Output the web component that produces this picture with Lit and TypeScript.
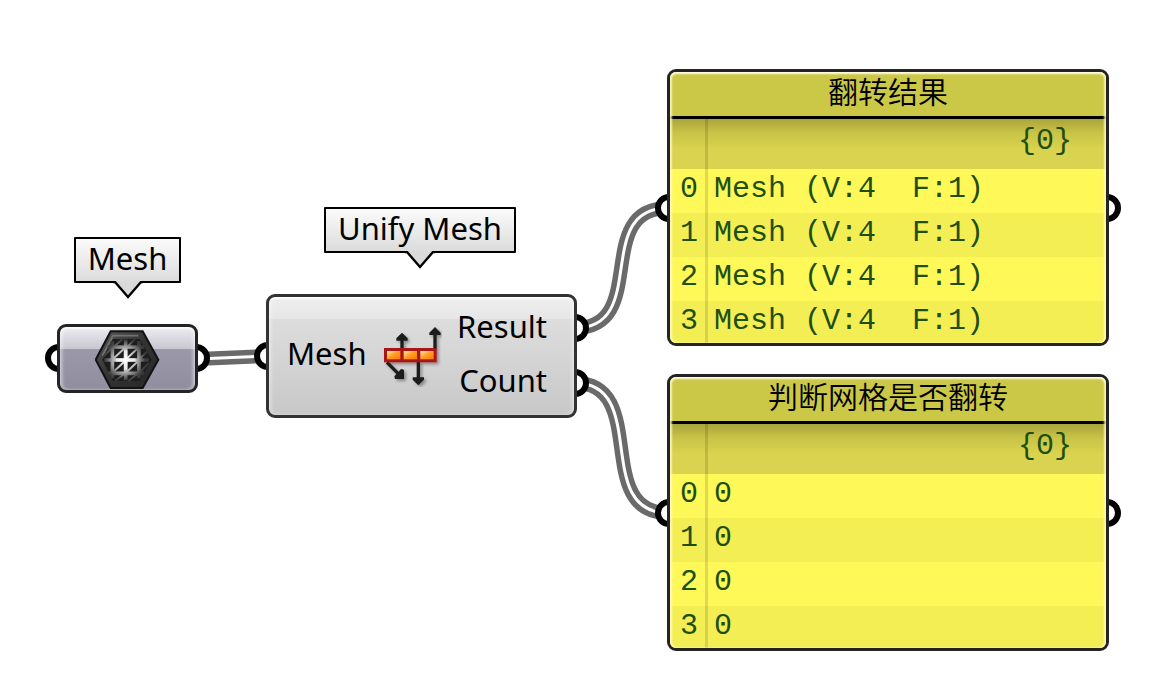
import { LitElement, html, css, svg } from "lit";
import { customElement, property } from "lit/decorators.js";

const cjk = css`"Noto Sans CJK SC", sans-serif`;

/** Small speech-bubble label that floats above a node. */
@customElement("node-tag")
class NodeTag extends LitElement {
  @property() label = "";

  static styles = css`
    :host { display: flex; flex-direction: column; align-items: center; }
    .box {
      box-sizing: border-box;
      width: 100%;
      border: 2px solid #000;
      border-radius: 1px;
      height: 46px;
      font: 31px/38px "Noto Sans", "Open Sans", sans-serif;
      text-align: center;
      white-space: nowrap;
      background: linear-gradient(#fbfbfb, #dcdcdc);
    }
    .tail { display: block; margin-top: -2px; }
  `;

  render() {
    return html`
      <div class="box">${this.label}</div>
      <svg class="tail" width="32" height="19" viewBox="0 0 32 19" aria-hidden="true">
        <path d="M3 0 L16 15 L29 0 Z" fill="#dadada" />
        <path d="M1 1 H3 L16 16 L29 1 H31" fill="none" stroke="#000" stroke-width="2.4" />
      </svg>
    `;
  }
}

/** Yellow data panel: title bar, branch path and indexed items. */
@customElement("data-panel")
class DataPanel extends LitElement {
  @property() heading = "";
  @property() path = "{0}";
  @property({ attribute: false }) items: string[] = [];

  static styles = css`
    :host { display: block; }
    .panel {
      position: relative;
      border: 3px solid #242424;
      border-radius: 9px;
      overflow: hidden;
      background: #fff859;
    }
    .panel::after {
      content: "";
      position: absolute;
      inset: 0;
      border-radius: 6px;
      box-shadow: inset 0 2px 2px #fffce0, inset 2px 0 2px #fffbc0cc, inset -2px 0 2px #fffbc0cc;
      pointer-events: none;
    }
    .title {
      margin: 0;
      height: 44px;
      font: 350 30px/36px ${cjk};
      text-align: center;
      color: #000;
      background: #cbc847;
      border-bottom: 3px solid #000;
    }
    table {
      width: 100%;
      border-collapse: separate;
      border-spacing: 0;
      table-layout: fixed;
      font: 30px/38px "Liberation Mono", monospace;
      color: #1e4f10;
    }
    .index-col { width: 38px; }
    th, td { padding: 1px 0 5px 6px; font-weight: 400; text-align: left; white-space: pre; }
    th { padding: 1px 0 5px 3px; text-align: center; border-right: 3px solid #0000001f; }
    .branch { background: linear-gradient(#aaa53a, #c9c447 14px, #d9d34f 30px, #d9d34f); }
    .branch th, .branch td { padding-bottom: 9px; padding-top: 3px; }
    .branch td { padding-right: 34px; text-align: right; }
    .item:nth-child(odd) { background: #f4ee55; }
    .item:nth-child(even) { background: #fff859; }
    .item:last-child th, .item:last-child td { padding-bottom: 3px; }
  `;

  render() {
    return html`
      <section class="panel">
        <h2 class="title">${this.heading}</h2>
        <table>
          <colgroup><col class="index-col" /><col /></colgroup>
          <tbody>
            <tr class="branch"><th></th><td>${this.path}</td></tr>
            ${this.items.map(
              (text, i) => html`<tr class="item"><th scope="row">${i}</th><td>${text}</td></tr>`
            )}
          </tbody>
        </table>
      </section>
    `;
  }
}

const grips: [number, number][] = [
  [59, 358], [196, 358], [268, 356], [575, 328], [575, 383],
  [669, 208], [1107, 208], [669, 513], [1107, 513],
];

const wires = [
  "M197 359 L268 356",
  "M575 328 C650 328 592 208 668 208",
  "M575 383 C650 383 592 513 668 513",
];

@customElement("app-root")
class AppRoot extends LitElement {
  static styles = css`
    :host { display: block; background: #fff; color: #000; }
    .canvas { position: relative; min-height: 100vh; overflow: hidden; }
    .wires { position: absolute; left: 0; top: 0; width: 100%; height: 100%; overflow: visible; }
    .node { position: absolute; box-sizing: border-box; }
    .at-tag-param { left: 74px; top: 237px; width: 107px; }
    .at-tag-unify { left: 324px; top: 207px; width: 192px; }
    .param {
      left: 57px; top: 324px; width: 141px; height: 69px;
      display: flex; align-items: center; justify-content: center;
      border: 3px solid #242424;
      border-radius: 9px;
      background: linear-gradient(#ededf2, #c8c7d1 22px, #9a98aa 22px, #908e9e);
      box-shadow: inset 0 2px 2px #ffffffcc, inset 3px 0 3px #ffffff55, inset -3px 0 3px #ffffff55;
    }
    .component {
      left: 266px; top: 294px; width: 311px; height: 124px;
      display: flex; align-items: center; justify-content: space-between;
      padding: 0 27px 0 18px;
      border: 3px solid #333;
      border-radius: 9px;
      font: 31px/40px "Noto Sans", "Open Sans", sans-serif;
      background: linear-gradient(#efefef, #e6e6e6 22px, #dddddd 22px, #c8c8c8);
      box-shadow: inset 0 2px 2px #ffffffcc, inset 3px 0 3px #ffffff44, inset -3px 0 3px #ffffff44;
    }
    .inputs, .outputs { display: grid; gap: 14px; padding-bottom: 6px; }
    .outputs { text-align: right; }
    .panel-result { left: 667px; top: 69px; width: 442px; }
    .panel-count { left: 667px; top: 374px; width: 442px; }
    svg { display: block; }
  `;

  private hexIcon() {
    return html`
      <svg width="65" height="60" viewBox="30 24 195 180" role="img" aria-label="Mesh">
        <defs>
          <linearGradient id="hex" x1="0" y1="0" x2="1" y2="1">
            <stop offset="0" stop-color="#5a5a5a" /><stop offset=".45" stop-color="#343434" /><stop offset="1" stop-color="#262626" />
          </linearGradient>
          <radialGradient id="glow" gradientUnits="userSpaceOnUse" cx="120" cy="117" r="78">
            <stop offset="0" stop-color="#fff" /><stop offset=".45" stop-color="#b4b4b4" /><stop offset=".75" stop-color="#444" /><stop offset="1" stop-color="#2a2a2a" />
          </radialGradient>
        </defs>
        <path d="M77 31 H173 L220 116 L173 201 H77 L32 116 Z" fill="url(#hex)" stroke="#121212" stroke-width="6" />
        <path d="M52 104 L84 44 H160" fill="none" stroke="#808080" stroke-width="5" opacity=".8" />
        <path d="M84 54 H164 L200 116 L164 180 H84 L52 116 Z" fill="#1d1d1d" />
        <path d="M82 60 V172 M122 56 V178 M162 60 V172 M58 117 H192 M68 78 H178 M68 157 H178"
              fill="none" stroke="url(#glow)" stroke-width="11" />
        <path d="M84 114 L120 80 M124 114 L160 80 M84 154 L120 120 M124 154 L160 120
                 M56 106 L82 78 M88 76 L112 54 M128 76 L150 54 M90 180 L118 159 M130 180 L158 159
                 M164 114 L186 92 M164 154 L192 126"
              fill="none" stroke="url(#glow)" stroke-width="6" />
        <path d="M122 88 V146 M92 117 H152" stroke="#fff" stroke-width="11" opacity=".6" />
      </svg>
    `;
  }

  private unifyIcon() {
    return html`
      <svg width="60" height="62" viewBox="21 24 180 186" role="img" aria-label="Unify Mesh">
        <defs>
          <linearGradient id="cell" x1="0" y1="0" x2="1" y2="1">
            <stop offset="0" stop-color="#ffe9a8" /><stop offset=".5" stop-color="#ff9a24" /><stop offset="1" stop-color="#fb7a00" />
          </linearGradient>
          <filter id="soft" x="-20%" y="-20%" width="140%" height="140%">
            <feDropShadow dx="6" dy="6" stdDeviation="4" flood-color="#000" flood-opacity=".35" />
          </filter>
        </defs>
        <g filter="url(#soft)">
          <g stroke="#1c1c1c" stroke-width="10" fill="none">
            <path d="M81 62 V98 M180 44 V98 M130 130 V190 M36 136 L72 172" />
          </g>
          <g fill="#1c1c1c">
            <path d="M81 47 L98 64 V71 H64 V64 Z M180 30 L197 47 V54 H163 V47 Z M130 205 L147 188 V181 H113 V188 Z M87 186 H60 L58 178 L78 156 L87 158 Z" />
          </g>
          <rect x="27" y="93" width="158" height="43" fill="#a81414" />
          ${[36, 86, 136].map((x) => svg`<rect x=${x} y="102" width="40" height="25" fill="url(#cell)" />`)}
        </g>
      </svg>
    `;
  }

  render() {
    const mesh = "Mesh (V:4  F:1)";
    return html`
      <main class="canvas">
        <svg class="wires" aria-hidden="true">
          <g fill="none" stroke="#6a6a6a" stroke-width="14">${wires.map((d) => svg`<path d=${d} />`)}</g>
          <g fill="none" stroke="#fff" stroke-width="3">${wires.map((d) => svg`<path d=${d} />`)}</g>
          <g fill="#fff" stroke="#000" stroke-width="6">
            ${grips.map(([x, y]) => svg`<circle cx=${x} cy=${y} r="11" />`)}
          </g>
        </svg>

        <node-tag class="node at-tag-param" label="Mesh"></node-tag>
        <div class="node param">${this.hexIcon()}</div>

        <node-tag class="node at-tag-unify" label="Unify Mesh"></node-tag>
        <div class="node component">
          <div class="inputs"><span>Mesh</span></div>
          ${this.unifyIcon()}
          <div class="outputs"><span>Result</span><span>Count</span></div>
        </div>

        <data-panel class="node panel-result" heading="翻转结果" .items=${[mesh, mesh, mesh, mesh]}></data-panel>
        <data-panel class="node panel-count" heading="判断网格是否翻转" .items=${["0", "0", "0", "0"]}></data-panel>
      </main>
    `;
  }
}
